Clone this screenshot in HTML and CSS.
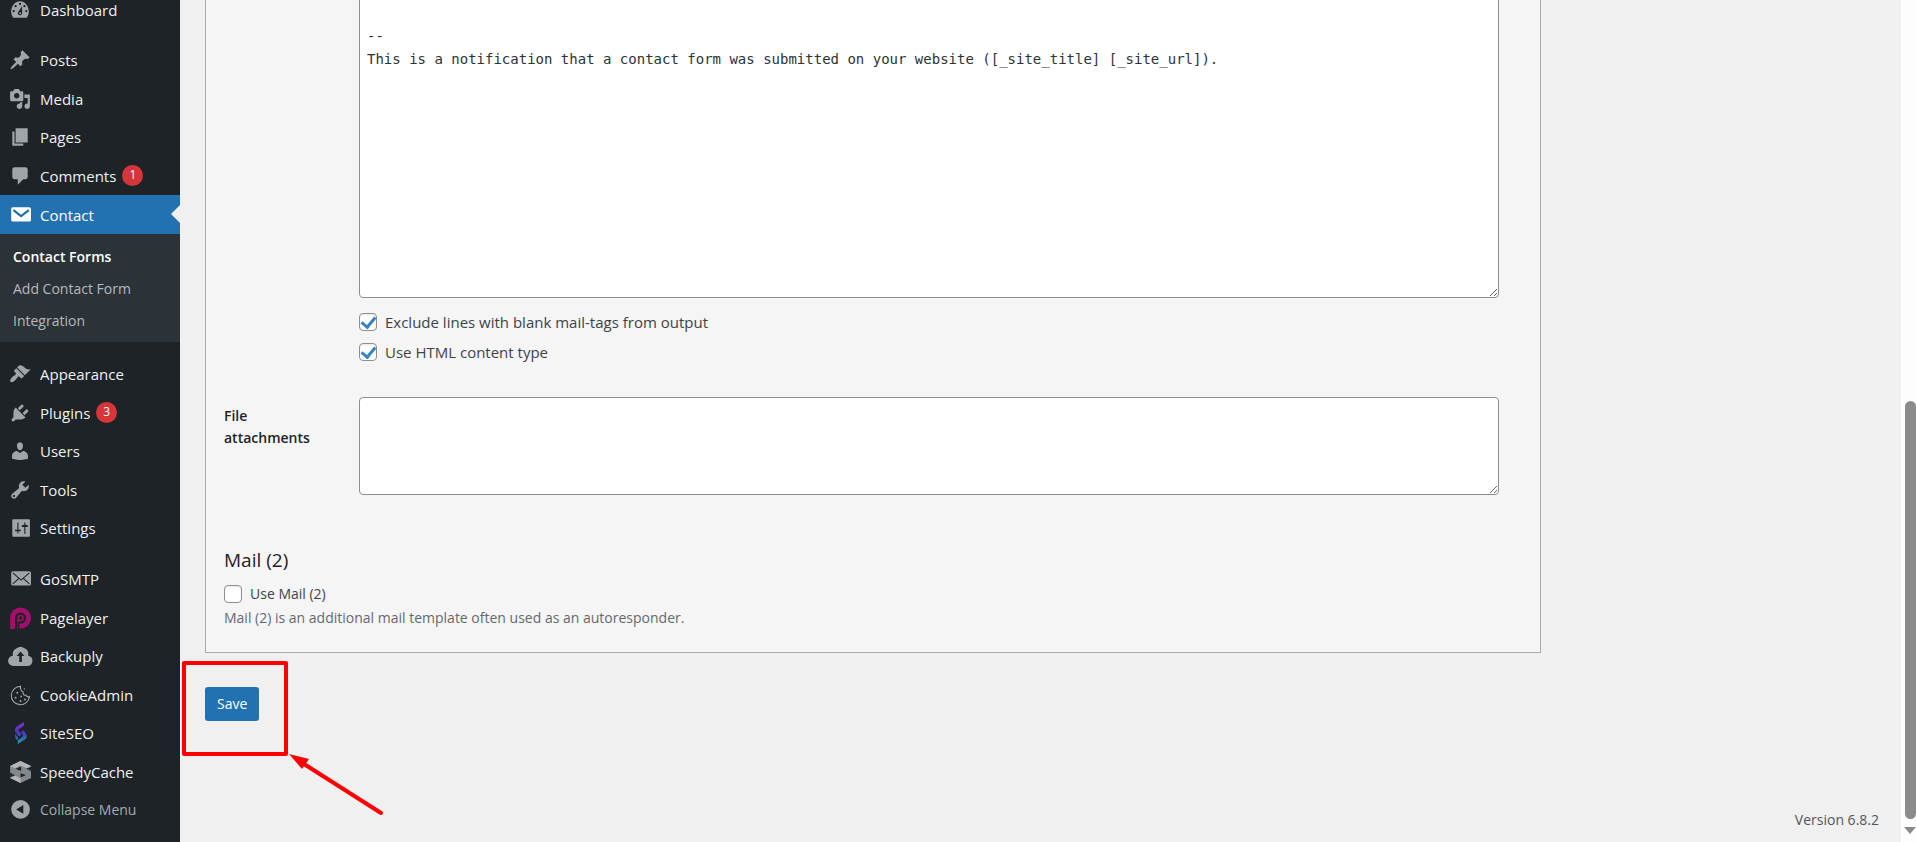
FILE: index.html
```
<!DOCTYPE html>
<html lang="en">
<head>
    <meta charset="UTF-8">
    <meta name="viewport" content="width=device-width, initial-scale=1.0">
    <title>Edit Contact Form</title>
    <link rel="stylesheet" href="styles.css">
</head>
<body>
    <div class="page">
        <nav class="sidebar">
            <ul class="menu">
                <li><a href="#"><svg viewBox="0 0 20 20"><path d="M3.8 17h12.4c1.1-1.6 1.8-3.500 1.800-5.600C18 6.200 14.400 2 10 2S2 6.200 2 11.400C2 13.500 2.700 15.400 3.800 17z"/><g class="cut"><circle cx="10" cy="4.500" r="1"/><circle cx="6" cy="6.500" r="1"/><circle cx="14" cy="6.500" r="1"/><circle cx="4.300" cy="11" r="1"/><circle cx="15.700" cy="11" r="1"/><path d="M11.800 6.500L12 13a2 2 0 1 1-3.500-1.500z"/></g><circle cx="10.200" cy="13" r="0.900"/></svg>Dashboard</a></li>
            </ul>
            <ul class="menu">
                <li><a href="#"><svg viewBox="0 0 20 20"><path d="M10.440 3.020l1.820-1.820 6.360 6.350-1.830 1.820c-1.050-.68-2.480-.57-3.410.36l-.75.75c-.92.93-1.040 2.350-.35 3.410l-1.830 1.820-2.410-2.410-2.800 2.790c-.42.42-3.380 2.710-3.800 2.290s1.860-3.390 2.280-3.810l2.790-2.790L4.100 9.360l1.830-1.820c1.050.69 2.480.57 3.400-.36l.75-.75c.93-.92 1.050-2.350.36-3.410z"/></svg>Posts</a></li>
                <li><a href="#"><svg viewBox="0 0 20 20"><path d="M13 11V4c0-.55-.45-1-1-1h-1.670L9 1H5L3.670 3H2c-.55 0-1 .45-1 1v7c0 .55.45 1 1 1h10c.55 0 1-.45 1-1zM7 4.500c1.380 0 2.500 1.120 2.500 2.500S8.380 9.500 7 9.500 4.500 8.380 4.500 7 5.620 4.500 7 4.500zM14 6h5v10.500c0 1.380-1.120 2.500-2.500 2.500S14 17.880 14 16.500s1.120-2.500 2.500-2.500c.17 0 .34.02.5.05V9h-3V6zm-4 8.050V13h2v3.500c0 1.380-1.120 2.500-2.500 2.500S7 17.880 7 16.500 8.120 14 9.500 14c.17 0 .34.02.5.05z"/></svg>Media</a></li>
                <li><a href="#"><svg viewBox="0 0 20 20"><path d="M6 15V2h11v13H6zm-1 1h8v2H3V5h2v11z"/></svg>Pages</a></li>
                <li><a href="#"><svg viewBox="0 0 20 20"><path d="M5 2h10c1.100 0 2 .9 2 2v7c0 1.100-.9 2-2 2h-2l-5 5v-5H5c-1.100 0-2-.9-2-2V4c0-1.100.9-2 2-2z"/></svg>Comments <span class="count">1</span></a></li>
                <li class="current"><a href="#"><svg viewBox="0 0 20 20"><rect x="2" y="3" width="18" height="13" rx="1.500"/><path class="fold" d="M4 5.500l7 5.500 7-5.500"/></svg>Contact</a>
                    <ul class="submenu">
                        <li><a class="active" href="#">Contact Forms</a></li>
                        <li><a href="#">Add Contact Form</a></li>
                        <li><a href="#">Integration</a></li>
                    </ul>
                </li>
            </ul>
            <ul class="menu">
                <li><a href="#"><svg viewBox="0 0 20 20"><path d="M14.480 11.060L7.410 3.990l1.500-1.500c.5-.56 2.300-.47 3.510.32 1.210.8 1.430 1.280 2.910 2.100 1.180.64 2.450 1.260 4.450.85zm-.71.71L6.700 4.700 4.930 6.470c-.39.39-.39 1.020 0 1.410l1.060 1.060c.39.39.39 1.030 0 1.420-.6.6-1.430 1.110-2.210 1.690-.35.26-.7.53-1.010.84C1.430 14.230.4 16.080 1.400 17.070c.99 1 2.840-.03 4.180-1.360.31-.31.58-.66.85-1.020.57-.78 1.080-1.610 1.690-2.210.39-.39 1.020-.39 1.410 0l1.060 1.060c.39.39 1.020.39 1.410 0z"/></svg>Appearance</a></li>
                <li><a href="#"><svg viewBox="0 0 20 20"><path d="M13.110 4.360L9.870 7.600 8 5.730l3.240-3.240c.35-.34 1.050-.2 1.560.32.52.51.66 1.210.31 1.550zm-8 1.770l.91-1.120 9.010 9.010-1.190.84c-.71.71-2.630 1.160-3.820 1.160H6.140L4.900 17.260c-.59.59-1.540.59-2.120 0-.59-.58-.59-1.530 0-2.120l1.240-1.240v-3.880c0-1.130.4-3.190 1.090-3.890zm7.260 3.970l3.240-3.240c.34-.35 1.040-.21 1.550.31.52.51.66 1.210.31 1.550l-3.240 3.250z"/></svg>Plugins <span class="count">3</span></a></li>
                <li><a href="#"><svg viewBox="0 0 20 20"><path d="M10 9.250c-2.270 0-2.730-3.440-2.730-3.440C7 4.020 7.820 2 9.970 2c2.160 0 2.980 2.020 2.710 3.810 0 0-.41 3.440-2.680 3.440zm0 2.570L12.720 10c2.390 0 4.520 2.330 4.520 4.530v2.490s-3.650 1.130-7.240 1.130c-3.650 0-7.240-1.130-7.240-1.130v-2.490c0-2.250 1.940-4.480 4.470-4.480z"/></svg>Users</a></li>
                <li><a href="#"><svg viewBox="0 0 20 20"><path d="M16.680 9.770c-1.340 1.340-3.300 1.670-4.950.99l-5.410 6.520c-.99.99-2.590.99-3.580 0s-.99-2.590 0-3.570l6.520-5.420c-.68-1.650-.35-3.610.99-4.950 1.280-1.280 3.120-1.620 4.720-1.060l-2.890 2.890 2.820 2.820 2.860-2.870c.53 1.580.18 3.390-1.080 4.650zM3.810 16.210c.4.39 1.040.39 1.430 0 .4-.4.4-1.040 0-1.430-.39-.4-1.030-.4-1.430 0-.39.39-.39 1.030 0 1.430z"/></svg>Tools</a></li>
                <li><a href="#"><svg viewBox="0 0 20 20"><path d="M19 17V3c0-.6-.4-1-1-1H4c-.6 0-1 .4-1 1v14c0 .6.4 1 1 1h14c.6 0 1-.4 1-1z"/><g class="cut"><path d="M7.600 5h1v6.500h2.100v1.400H8.600V15h-1v-2.100H5.500v-1.400h2.100zM13.900 15.500V9h-2.200V7.600l2.200-.6V5h1v2l2.200.6V9h-2.200v6.500z"/></g></svg>Settings</a></li>
            </ul>
            <ul class="menu">
                <li><a href="#"><svg viewBox="0 0 20 20"><rect x="2" y="3" width="18" height="13" rx="1.500"/><path class="seam" d="M3.500 4.500l7.500 6.500 7.500-6.500M3.500 14.500L9 9.500M18.500 14.500L13 9.500"/></svg>GoSMTP</a></li>
                <li><a href="#"><svg viewBox="0 0 20 20"><path fill="#a3106b" d="M1 20V10a9.500 9.500 0 1 1 9.500 9.500L8 20z"/><path class="cut" d="M5.500 20V10a5 5 0 1 1 5 5H9.500v5H8v-6.500l2.500-.5a3 3 0 1 0-3-3V20z"/><circle class="cut" cx="10.500" cy="10" r="1.500"/></svg>Pagelayer</a></li>
                <li><a href="#"><svg viewBox="0 0 20 20"><path d="M4 19A4.500 4.500 0 0 1 3.500 9.800 5.500 5.500 0 0 1 7 3Q10.500 0 14 3A5.500 5.500 0 0 1 17.500 9.700 4.700 4.700 0 0 1 17 19z"/><path class="cut" d="M10.500 6l3.500 4h-2.300v5.500H9.300V10H7z"/></svg>Backuply</a></li>
                <li><a href="#"><svg viewBox="0 0 20 20"><g class="line"><path d="M10.500 2.200A8.300 8.300 0 1 0 18.600 11.500Q16.500 12.300 15.500 10.200 12.500 10.500 12.800 7.300 10 6 10.500 2.200z"/></g><circle cx="7.500" cy="8" r="0.900"/><circle cx="6" cy="12.500" r="0.900"/><circle cx="10.500" cy="15.500" r="0.900"/><circle cx="11" cy="11.300" r="0.800"/><circle cx="14.500" cy="14" r="0.900"/><circle cx="14" cy="4.500" r="0.600"/></svg>CookieAdmin</a></li>
                <li><a href="#"><svg viewBox="0 0 20 20"><defs><linearGradient id="seo" x1="0" y1="0" x2="0" y2="1"><stop offset="0" stop-color="#8a2fd0"/><stop offset="0.500" stop-color="#4a35b8"/><stop offset="1" stop-color="#12a5a5"/></linearGradient></defs><path fill="url(#seo)" d="M13.500 0v3.500L9 6.500q-.8.7 0 1.600l2.500 3-2.400 2L6 9.500Q4.500 7 6.500 4.500zM12.500 7l2.700 3q1.800 3 0 5.500L8 20v-3.500l4-2.800q1.200-1 .4-2l-1.500-2zM5.500 11l2.800 3-.3 2.500q-3-1-2.500-5.500z"/></svg>SiteSEO</a></li>
                <li><a href="#"><svg viewBox="0 0 20 20"><path fill="#85888b" d="M10.500 0L20 4.500v4.300l-4.500-1.800L20 9.500v6L10.500 20 1 15.500v-3.800l4.500 1.300L1 10.500v-6z"/><path fill="#b4b6b8" d="M10.500 0L20 4.500 16 6.500l-5.500-2.300L5.500 6.500 1 4.500zM1 15.500l4.500-2 5 2.200V20z"/><path class="cut" d="M20 5.500v3L15.500 7zM1 11.500v3.200l4.500-1.700zM6 7l5-2v4zM15.500 12.800l-5 2.300v-4z"/></svg>SpeedyCache</a></li>
                <li class="collapse"><button type="button"><svg viewBox="0 0 20 20"><circle cx="10.500" cy="9.500" r="8.500"/><path class="cut" d="M13 5.500v8L6.500 9.500z"/></svg>Collapse Menu</button></li>
            </ul>
        </nav>

        <main class="content">
            <form class="editor">
                <div class="panel">
                    <table class="form-table">
                        <tr>
                            <th></th>
                            <td>
                                <textarea class="message-body" aria-label="Message body">


--
This is a notification that a contact form was submitted on your website ([_site_title] [_site_url]).</textarea>
                                <div class="options">
                                    <label><input type="checkbox" checked>Exclude lines with blank mail-tags from output</label>
                                    <label><input type="checkbox" checked>Use HTML content type</label>
                                </div>
                            </td>
                        </tr>
                        <tr>
                            <th><label for="attachments">File attachments</label></th>
                            <td><textarea class="attachments" id="attachments"></textarea></td>
                        </tr>
                    </table>
                    <h2>Mail (2)</h2>
                    <label class="use-mail"><input type="checkbox">Use Mail (2)</label>
                    <p class="hint">Mail (2) is an additional mail template often used as an autoresponder.</p>
                </div>
                <div class="submit">
                    <button class="save" type="submit">Save</button>
                    <span class="highlight"></span>
                    <svg class="arrow" viewBox="0 0 100 66"><path d="M15 10L92 59" fill="none" stroke="#f00" stroke-width="4" stroke-linecap="round"/><path d="M0 0l20 5-7 10z" fill="#f00"/></svg>
                </div>
            </form>
            <footer>Version 6.8.2</footer>
        </main>

        <div class="scrollbar">
            <div class="thumb"></div>
            <div class="down"></div>
        </div>
    </div>
</body>
</html>
```
FILE: styles.css
```
* {
    box-sizing: border-box;
}
body {
    margin: 0;
    font-family: "Open Sans", "Noto Sans", sans-serif;
    font-size: 14px;
    line-height: 22px;
    color: #3c434a;
    background: #f0f0f0;
}
.page {
    display: flex;
    min-height: 100vh;
    overflow: hidden;
}

/* admin menu */
.sidebar {
    width: 180px;
    flex-shrink: 0;
    margin-top: -9px;
    background: #1d2327;
}
.menu, .submenu {
    margin: 0;
    padding: 0;
    list-style: none;
}
.menu {
    margin-bottom: 12px;
}
.menu + .menu + .menu {
    margin-top: 13px;
}
.menu > li > a, .collapse button {
    display: flex;
    align-items: center;
    width: 100%;
    height: 38px;
    padding: 0 0 0 9px;
    color: #f0f0f1;
    font-size: 15px;
    text-decoration: none;
}
.menu > li:nth-child(even) > a, .menu > .current > a {
    height: 39px;
}
.menu svg {
    width: 22px;
    height: 22px;
    margin-right: 9px;
    fill: #a0a5aa;
    overflow: visible;
}
.menu .cut {
    fill: #1d2327;
}
.menu .seam {
    fill: none;
    stroke: #1d2327;
}
.menu .line {
    fill: none;
    stroke: #a0a5aa;
}
.menu .fold {
    fill: none;
    stroke: #2271b1;
    stroke-width: 2;
}
.count {
    width: 21px;
    height: 21px;
    margin-left: 6px;
    border-radius: 50%;
    background: #d63638;
    color: #fff;
    font-size: 12px;
    line-height: 20px;
    text-align: center;
}
.menu > .current > a {
    position: relative;
    background: #2271b1;
    color: #fff;
}
.current > a::after {
    content: "";
    position: absolute;
    right: 0;
    top: 10px;
    border: 9px solid transparent;
    border-left: 0;
    border-right-color: #f0f0f0;
}
.menu .current svg {
    fill: #fff;
}
.submenu {
    padding: 7px 0 5px;
    background: #2c3338;
}
.submenu a {
    display: block;
    padding: 5px 13px;
    color: #b4b9be;
    text-decoration: none;
}
.submenu .active {
    color: #fff;
    font-weight: 600;
}
.collapse button {
    border: 0;
    background: none;
    color: #a7aaad;
    font: inherit;
}

/* form editor */
.content {
    flex: 1;
    display: flex;
    flex-direction: column;
    min-width: 0;
}
.editor {
    margin: -24px 360px 0 25px;
}
.panel {
    padding: 0 41px 23px 18px;
    border: 1px solid #a7aaad;
    border-top: 0;
    background: #f5f5f5;
}
.form-table {
    width: 100%;
    border-collapse: collapse;
}
.form-table th {
    width: 135px;
    padding: 8px 30px 0 0;
    color: #1d2327;
    font-weight: 600;
    text-align: left;
    vertical-align: top;
}
.form-table td {
    padding: 0;
}
textarea {
    display: block;
    width: 100%;
    padding: 2px 7px;
    border: 1px solid #8c8f94;
    border-radius: 4px;
    background: #fff;
    color: #2c3338;
    font: 14px/23px "DejaVu Sans Mono", monospace;
}
.message-body {
    height: 322px;
    overflow: hidden;
}
.attachments {
    height: 98px;
}
.options {
    display: flex;
    flex-direction: column;
    gap: 8px;
    padding: 13px 0 34px;
    font-size: 15px;
}
.options label, .use-mail {
    display: flex;
    align-items: center;
    gap: 8px;
}
input[type="checkbox"] {
    appearance: none;
    display: grid;
    place-items: center;
    width: 18px;
    height: 18px;
    margin: 0;
    border: 1px solid #8c8f94;
    border-radius: 4px;
    background: #fff;
    box-shadow: inset 0 1px 2px rgba(0,0,0,0.1);
}
input[type="checkbox"]:checked::before {
    content: "";
    width: 6px;
    height: 11px;
    margin-bottom: 3px;
    border: solid #3582c4;
    border-width: 0 3px 3px 0;
    transform: rotate(40deg);
}
h2 {
    margin: 52px 0 10px;
    color: #1d2327;
    font-size: 19px;
    font-weight: 400;
    line-height: 26px;
}
.hint {
    margin: 2px 0 0;
    color: #646970;
}
.submit {
    position: relative;
    padding-top: 34px;
}
.save {
    height: 34px;
    padding: 0 12px;
    border: 0;
    border-radius: 3px;
    background: #2271b1;
    color: #fff;
    font: inherit;
}
.highlight {
    position: absolute;
    left: -23px;
    top: 8px;
    width: 106px;
    height: 95px;
    border: 4px solid #f00;
    border-radius: 2px;
}
.arrow {
    position: absolute;
    left: 84px;
    top: 101px;
    width: 100px;
    height: 66px;
}
footer {
    margin-top: auto;
    padding: 0 22px 11px;
    text-align: right;
    color: #50575e;
}

/* window scrollbar */
.scrollbar {
    display: flex;
    flex-direction: column;
    justify-content: flex-end;
    align-items: flex-end;
    width: 15px;
    padding-bottom: 8px;
    background: #fdfdfd;
}
.thumb {
    width: 11px;
    height: 418px;
    border-radius: 6px;
    background: #8b8b8b;
}
.down {
    margin-top: 8px;
    border: 6px solid transparent;
    border-top: 7px solid #8b8b8b;
    border-bottom: 0;
}
```
